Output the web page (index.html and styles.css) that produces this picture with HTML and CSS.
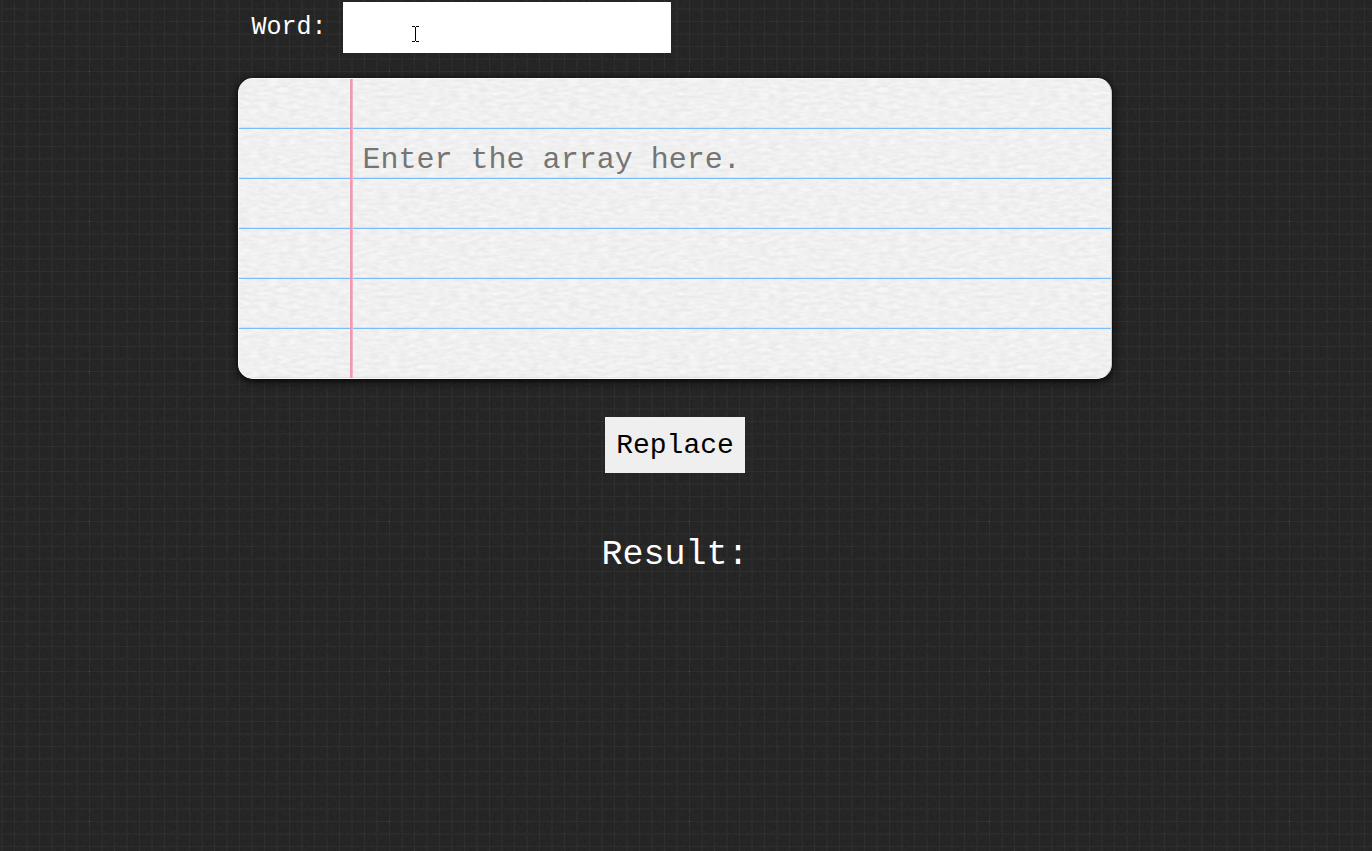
FILE: index.html
```html
<!DOCTYPE html>
<html lang="en">
<head>
  <meta charset="utf-8">
  <meta name="viewport" content="width=device-width, initial-scale=1">
  <title>Word replace</title>
  <link rel="stylesheet" href="styles.css">
</head>
<body>
  <main class="page">
    <form class="form">
      <div class="word-row">
        <label class="word-label" for="word">Word:</label>
        <span class="word-field">
          <input class="word-input" id="word" type="text">
          <svg class="caret" width="7" height="16" viewBox="0 0 7 16" aria-hidden="true" shape-rendering="crispEdges">
            <path d="M0 0h3v1H0zM4 0h3v1H4zM3 1h1v14H3zM0 15h3v1H0zM4 15h3v1H4z" fill="#000"/>
          </svg>
        </span>
      </div>
      <textarea class="paper" aria-label="Array" placeholder="Enter the array here."></textarea>
      <button class="replace" type="button">Replace</button>
    </form>
    <output class="result" for="word">Result:</output>
  </main>
</body>
</html>
```

FILE: styles.css
```css
* {
  box-sizing: border-box;
}

body {
  margin: 0;
  min-height: 100vh;
  background-color: #232323;
  background-image:
    url("data:image/svg+xml,%3Csvg xmlns='http://www.w3.org/2000/svg' width='300' height='150'%3E%3Cpath d='M89 71h1v1h-1z' fill='%23fff' fill-opacity='.2'/%3E%3Cfilter id='n' x='0' y='0' width='100%25' height='100%25'%3E%3CfeTurbulence type='fractalNoise' baseFrequency='.3' numOctaves='2' stitchTiles='stitch'/%3E%3CfeColorMatrix values='0 0 0 0 1 0 0 0 0 1 0 0 0 0 1 .04 0 0 0 -.01'/%3E%3C/filter%3E%3Crect width='300' height='150' filter='url(%23n)'/%3E%3C/svg%3E"),
    url("data:image/svg+xml,%3Csvg xmlns='http://www.w3.org/2000/svg' width='25' height='25'%3E%3Cg fill='%23fff'%3E%3Cpath d='M1 0h2v25H1zM0 8h25v2H0z' fill-opacity='.025'/%3E%3Cpath d='M14 0h1v25h-1zM0 21h25v1H0z' fill-opacity='.045'/%3E%3C/g%3E%3C/svg%3E");
  color: #fff;
  font-family: "Courier New", "Liberation Mono", monospace;
}

.page {
  display: flex;
  flex-direction: column;
  align-items: center;
  padding: 2px 22px 0 0;
}

.form {
  display: flex;
  flex-direction: column;
  align-items: center;
  width: 64.8%;
}

.word-row {
  display: flex;
  align-items: center;
  align-self: flex-start;
  gap: 16px;
  padding-left: 14px;
}

.word-label {
  font-size: 25px;
}

.word-field {
  position: relative;
}

.word-input {
  display: block;
  width: 328px;
  height: 51px;
  padding: 0 10px;
  border: 0;
  background: #fff;
  color: #000;
  font: inherit;
  font-size: 25px;
}

.caret {
  position: absolute;
  top: 24px;
  left: 69px;
}

.paper {
  width: 100%;
  height: 301px;
  margin-top: 25px;
  padding: 56px 12px 0 124px;
  border: 1px solid #fafafa;
  border-right-color: #d9c4c0;
  border-left-color: #f4f4f4;
  border-radius: 15px;
  resize: none;
  background-color: #f0f0f0;
  background-image:
    linear-gradient(90deg, transparent 111px, #ee9aaf 111px, #ee9aaf 113px, #f0b4c3 113px, #f0b4c3 114px, transparent 114px),
    linear-gradient(transparent 48px, #b9d8f6 49px, #7dbcfb 49px),
    url("data:image/svg+xml,%3Csvg xmlns='http://www.w3.org/2000/svg' width='300' height='200'%3E%3Cfilter id='p' x='0' y='0' width='100%25' height='100%25' color-interpolation-filters='sRGB'%3E%3CfeTurbulence type='fractalNoise' baseFrequency='.1 .3' numOctaves='2' seed='4' stitchTiles='stitch'/%3E%3CfeColorMatrix values='.09 0 0 0 .896 .09 0 0 0 .896 .09 0 0 0 .896 0 0 0 0 1'/%3E%3C/filter%3E%3Crect width='300' height='200' filter='url(%23p)'/%3E%3C/svg%3E");
  background-size: 100% 100%, 100% 50px, 300px 200px;
  box-shadow: 0 2px 10px #000;
  color: #222;
  font: inherit;
  font-size: 30px;
  line-height: 50px;
}

.paper::placeholder {
  color: #757575;
  opacity: 1;
}

.replace {
  height: 56px;
  margin-top: 38px;
  padding: 0 11px;
  border: 0;
  background: #efefef;
  color: #000;
  font: inherit;
  font-size: 28px;
}

.result {
  margin-top: 62px;
  font-size: 35px;
  line-height: 40px;
}
```
